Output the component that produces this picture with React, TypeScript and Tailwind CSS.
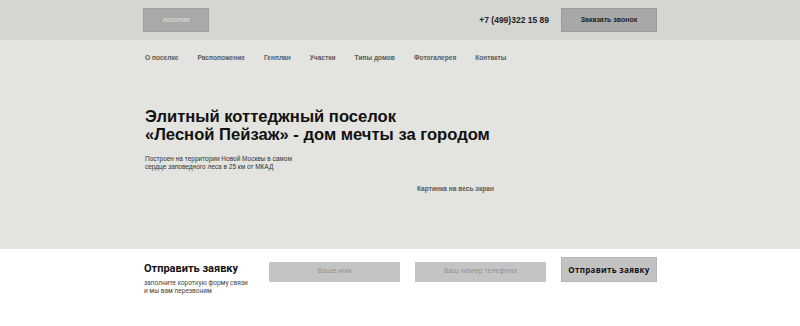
const NAV = ['О поселке', 'Расположение', 'Генплан', 'Участки', 'Типы домов', 'Фотогалерея', 'Контакты'];

const arial = { fontFamily: '"Liberation Sans", Arial, sans-serif' };

export default function App() {
  return (
    <div className="h-[326px] w-full overflow-hidden bg-white" style={arial}>
      {/* top bar */}
      <header className="h-[40px] bg-[#d5d5d1]">
        <div className="mx-auto flex h-full w-[514px] items-center">
          <div className="flex h-[24px] w-[66px] items-center justify-center border border-[#9f9f9c] bg-[#a9a9a7] text-[7.5px] text-[#e4e4e4]">
            логотип
          </div>
          <span className="ml-auto text-[8.5px] font-bold text-[#222]">+7 (499)322 15 89</span>
          <button className="ml-[12px] flex h-[24px] w-[96px] items-center justify-center border border-[#9c9c9a] bg-[#a8a8a6] text-[7px] font-bold text-[#222]">
            Заказать звонок
          </button>
        </div>
      </header>

      {/* hero */}
      <section className="h-[209px] bg-[#e3e3df]">
        <div className="mx-auto w-[514px] pl-[2px]">
          <nav className="flex gap-[19px] pt-[13px] text-[6.6px] font-bold text-[#5a5a5a]">
            {NAV.map(n => <span key={n}>{n}</span>)}
          </nav>
          <h1 className="mt-[45px] text-[16.6px] font-bold leading-[18px] text-[#111]">
            Элитный коттеджный поселок<br />«Лесной Пейзаж» - дом мечты за городом
          </h1>
          <p className="mt-[11px] text-[6.5px] leading-[8px] text-[#333]">
            Построен на территории Новой Москвы в самом<br />сердце заповедного леса в 25 км от МКАД
          </p>
          <p className="mt-[13px] pl-[272px] text-[6.6px] font-bold text-[#5a5a5a]">Картинка на весь экран</p>
        </div>
      </section>

      {/* form */}
      <section className="bg-white">
        <div className="mx-auto flex w-[514px] items-start pt-[10px]">
          <div className="w-[126px] pl-[1px] pt-[4px]" style={{ fontFamily: 'Roboto, "Liberation Sans", sans-serif' }}>
            <div className="text-[11px] font-bold leading-[12px] text-[#111]">Отправить заявку</div>
            <div className="mt-[4px] text-[6.5px] leading-[8px] text-[#444]">
              заполните короткую форму связи<br />и мы вам перезвоним
            </div>
          </div>
          <div className="flex flex-1 items-center gap-[15px] pt-[2px]" style={{ fontFamily: '"Open Sans", sans-serif' }}>
            <div className="flex h-[20px] w-[131px] items-center justify-center bg-[#c4c4c4] text-[7px] text-[#8e8e8e]">Ваше имя</div>
            <div className="flex h-[20px] w-[131px] items-center justify-center bg-[#c4c4c4] text-[7px] text-[#8e8e8e]">Ваш номер телефона</div>
            <button className="-mt-[4px] ml-auto flex h-[25px] w-[96px] items-center justify-center border border-[#b5b5b5] bg-[#c2c2c2] text-[8px] font-bold tracking-[0.3px] text-[#111]">
              Отправить заявку
            </button>
          </div>
        </div>
      </section>
    </div>
  );
}
